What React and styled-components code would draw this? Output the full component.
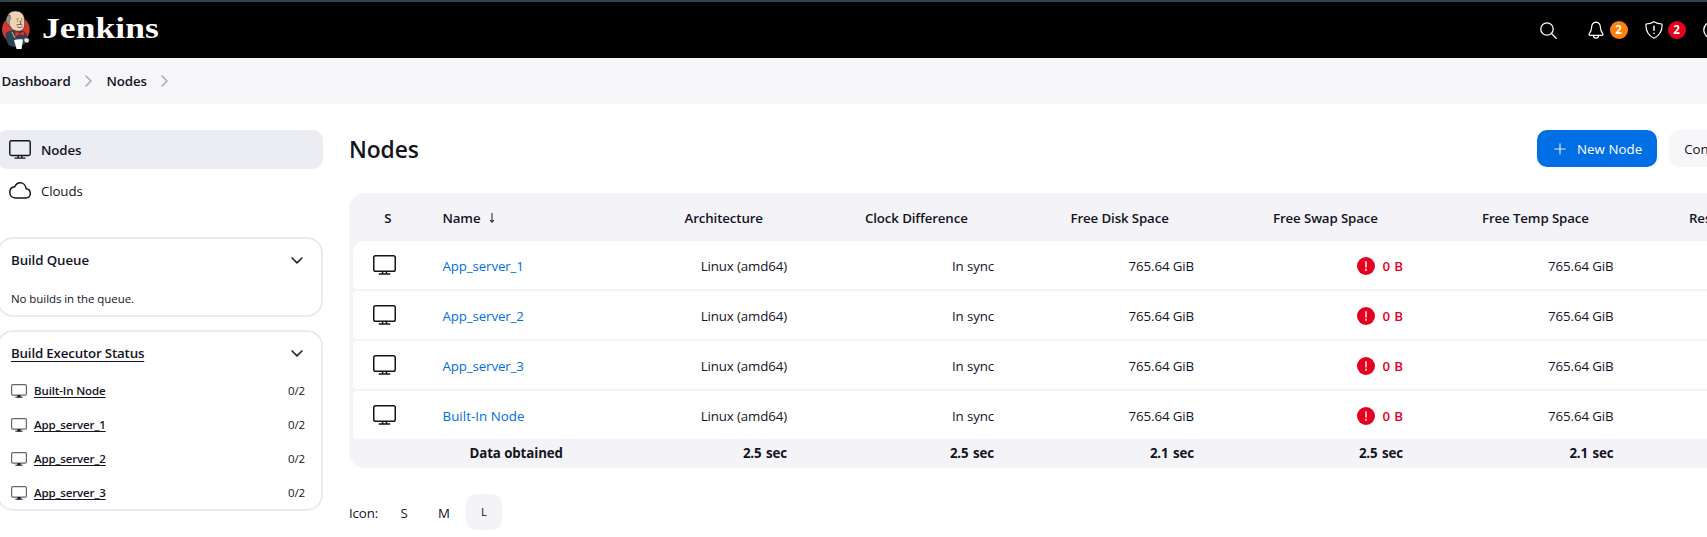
import React from 'react';
import styled, { createGlobalStyle, css } from 'styled-components';

const GlobalStyle = createGlobalStyle`
  * { box-sizing: border-box; }
  body {
    margin: 0;
    overflow: hidden;
    background: #fff;
    color: #14141f;
    font-family: 'Open Sans', 'Noto Sans', sans-serif;
    font-size: 13.3px;
    letter-spacing: -0.12px;
    line-height: 20px;
  }
`;

const Page = styled.div`
  width: 100%;
  height: 537px;
  overflow: hidden;
  display: flex;
  flex-direction: column;
`;

/* Header */
const Header = styled.header`
  flex: none;
  height: 58px;
  border-top: 2px solid #2b444c;
  background: #000;
  color: #fff;
  display: flex;
  align-items: center;
  justify-content: space-between;
  overflow: hidden;
`;

const Brand = styled.a`
  display: flex;
  align-items: center;
  gap: 12px;
  padding-left: 1px;
`;

const BrandName = styled.span`
  font: 700 30px/40px 'Liberation Serif', serif;
  letter-spacing: 0.1px;
  transform: scaleX(1.18);
  transform-origin: left center;
  margin-top: -4px;
`;

const HeaderTools = styled.nav`
  flex: none;
  width: 167.5px;
  display: flex;
  align-items: center;
  svg { flex: none; }
`;

const HeaderItem = styled.a`
  flex: none;
  display: flex;
  align-items: center;
  gap: ${(p) => p.$gap || 0}px;
  margin-right: ${(p) => p.$after}px;
`;

const Badge = styled.span`
  width: 18px;
  height: 18px;
  border-radius: 50%;
  background: ${(p) => p.$color};
  font-size: 11.5px;
  font-weight: 700;
  line-height: 18px;
  text-align: center;
  letter-spacing: 0;
`;

/* Breadcrumbs */
const Breadcrumbs = styled.nav`
  flex: none;
  height: 46px;
  background: #f6f6f8;
  display: flex;
  align-items: center;
  padding: 0 0 0 1.5px;
  font-weight: 600;
  letter-spacing: -0.16px;
  svg { margin: 0 14.5px 0 14.5px; }
`;

/* Layout */
const Body = styled.div`
  flex: 1;
  display: grid;
  grid-template-columns: 326px 1480px;
  column-gap: 26px;
  padding-top: 26px;
  margin-left: -3px;
`;

const Sidebar = styled.aside`
  display: flex;
  flex-direction: column;
`;

const Task = styled.a`
  height: 39px;
  margin-bottom: 2px;
  display: flex;
  align-items: center;
  gap: 10px;
  padding: 0 0 0 12px;
  border-radius: 10px;
  ${(p) => p.$active && css`
    background: #ecedf3;
    font-weight: 600;
    letter-spacing: -0.1px;
  `}
`;

const Pane = styled.section`
  flex: none;
  height: ${(p) => p.$height}px;
  margin-top: ${(p) => p.$gap}px;
  border: 2px solid #eaeaf2;
  border-radius: 16px;
  padding: 0 16px 0 12px;
`;

const PaneHeader = styled.div`
  height: 42px;
  padding-right: 2px;
  display: flex;
  align-items: center;
  justify-content: space-between;
  font-weight: 600;
  letter-spacing: -0.1px;
`;

const PaneTitle = styled.span`
  ${(p) => p.$link && css`
    text-decoration: underline;
    text-underline-offset: 2.5px;
    text-decoration-thickness: 1px;
    letter-spacing: -0.17px;
  `}
`;

const EmptyQueue = styled.p`
  margin: 8px 0 0;
  font-size: 11.5px;
  letter-spacing: -0.07px;
`;

const Executor = styled.div`
  height: 34px;
  display: flex;
  align-items: center;
  gap: 7px;
  font-size: 11.5px;
  letter-spacing: -0.13px;
  svg { color: #66666f; margin-top: -1px; }
`;

const ExecutorName = styled.a`
  flex: 1;
  font-weight: 600;
  text-decoration: underline;
  text-underline-offset: 2px;
  text-decoration-thickness: 1px;
  text-decoration-skip-ink: none;
`;

const Main = styled.main`
  display: flex;
  flex-direction: column;
`;

const AppBar = styled.div`
  height: 37px;
  display: flex;
  align-items: center;
`;

const Title = styled.h1`
  flex: none;
  margin: 0;
  padding-top: 2px;
  width: 1188px;
  font-size: 22.8px;
  line-height: 36px;
  font-weight: 600;
  letter-spacing: -0.1px;
`;

const Button = styled.button`
  flex: none;
  height: 37px;
  margin-right: 12px;
  border: 0;
  border-radius: 10px;
  padding: 0 15px 0 ${(p) => (p.$primary ? 17 : 15)}px;
  display: flex;
  align-items: center;
  gap: 11px;
  font: inherit;
  letter-spacing: ${(p) => (p.$primary ? 0.05 : -0.1)}px;
  white-space: nowrap;
  color: ${(p) => (p.$primary ? '#fff' : '#14141f')};
  background: ${(p) => (p.$primary ? '#006fe6' : '#f7f7f9')};
`;

/* Table */
const Table = styled.div`
  margin-top: 26px;
  height: 275px;
  padding: 0 4px;
  border-radius: 16px;
  background: #f3f3f8;
  display: flex;
  flex-direction: column;
`;

const Row = styled.div`
  flex: none;
  display: grid;
  grid-template-columns: 89.5px 242px 180.5px 205.5px 202.5px 209px 207px 1fr;
  align-items: center;
`;

const HeadRow = styled(Row)`
  height: 48px;
  padding-top: 2px;
  font-weight: 600;
  letter-spacing: -0.13px;
`;

const NodeRow = styled(Row)`
  height: 48px;
  padding-top: 2px;
  margin-bottom: 2px;
  background: #fff;
  border-radius: 4px;
  &:nth-child(2) { border-top-left-radius: 11px; }
`;

const FootRow = styled(Row)`
  height: 25px;
  margin-top: -1px;
  font-weight: 700;
  word-spacing: 1.2px;
`;

const StatusCell = styled.div`
  display: flex;
  justify-content: center;
  padding-right: ${(p) => p.$inset}px;
  svg { margin-top: -2px; }
`;

const NameCell = styled.div`
  display: flex;
  align-items: center;
  gap: 9px;
`;

const NodeLink = styled.a`
  color: #006fe6;
  letter-spacing: ${(p) => (p.children.includes('-') ? 0.05 : -0.12)}px;
`;

const ValueCell = styled.div`
  display: flex;
  justify-content: flex-end;
  align-items: center;
  gap: 8px;
  padding-right: ${(p) => p.$inset}px;
  color: ${(p) => (p.$error ? '#e6001f' : 'inherit')};
  font-weight: ${(p) => (p.$error ? 600 : 'inherit')};
  ${(p) => p.$error && 'word-spacing: 1px;'}
  svg { margin-top: -1px; }
`;

const ObtainedCell = styled.div`
  padding-left: 27px;
  word-spacing: 0;
  letter-spacing: -0.1px;
`;

/* Icon size picker */
const SizePicker = styled.div`
  display: flex;
  align-items: center;
  margin-top: 26px;
`;

const SizeLabel = styled.span`
  width: 35px;
  padding-top: 2px;
`;

const SizeOption = styled.a`
  width: ${(p) => (p.$selected ? 36 : 40)}px;
  height: 36px;
  border-radius: 10px;
  display: flex;
  align-items: center;
  justify-content: center;
  padding-top: ${(p) => (p.$selected ? 0 : 2)}px;
  margin-left: ${(p) => (p.$selected ? 2 : 0)}px;
  background: ${(p) => (p.$selected ? '#f3f3f8' : 'transparent')};
  font-size: ${(p) => (p.$selected ? 11.5 : 13.3)}px;
`;

/* Icons */
const Monitor = ({ width = 23, height = 20, stroke = 1.5 }) => (
  <svg width={width} height={height} viewBox="0 0 23 20" fill="none" stroke="currentColor" strokeWidth={stroke} strokeLinecap="round">
    <rect x="0.75" y="0.75" width="21.5" height="15.5" rx="1.8" />
    <path d="M9.8 16.4 9.4 19M13.2 16.4 13.6 19M6.3 19.1H16.7" />
  </svg>
);

const SmallMonitor = () => (
  <svg width="16" height="14" viewBox="0 0 16 14" fill="none" stroke="currentColor" strokeWidth="1.2">
    <rect x="0.6" y="0.6" width="14.8" height="10.6" rx="1.2" />
    <path d="M4.3 13.2H11.7" stroke="#44444e" />
    <path d="M6.5 11h3l.3 2.5H6.200z" fill="#22222c" stroke="none" />
  </svg>
);

const Cloud = () => (
  <svg width="22" height="17" viewBox="0 0 22 17" fill="none" stroke="currentColor" strokeWidth="1.5" strokeLinejoin="round">
    <path d="M17.1 6.7C16.7 3.3 14.3.8 11.2.8 8.600.8 6.800 2.400 5.800 4.800 2.800 5.100.8 7.300.8 10.300c0 3.200 2.300 5.600 5.300 5.600h11c2.300 0 4.200-1.800 4.200-4.500 0-2.600-1.700-4.500-4.200-4.700z" />
  </svg>
);

const Chevron = ({ right }) => (
  <svg width={right ? 7 : 12} height={right ? 12 : 7} viewBox={right ? '0 0 7 12' : '0 0 12 7'} fill="none" stroke={right ? '#9fb0c6' : '#2a2a33'} strokeWidth={right ? 1.6 : 1.7} strokeLinecap="round" strokeLinejoin="round">
    <path d={right ? 'M1 1l5 5-5 5' : 'M1.100 1l4.900 4.900L10.900 1'} />
  </svg>
);

const Search = () => (
  <svg width="17" height="17" viewBox="0 0 17 17" fill="none" stroke="#fff" strokeWidth="1.3" strokeLinecap="round">
    <circle cx="7" cy="7" r="6.200" />
    <path d="M11.600 11.600 16.200 16.200" />
  </svg>
);

const Bell = () => (
  <svg width="16" height="18" viewBox="0 0 16 18" fill="none" stroke="#fff" strokeWidth="1.2" strokeLinecap="round" strokeLinejoin="round">
    <path d="M8 1.200C5.200 1.500 3.700 3.600 3.600 6.300 3.500 10 2.700 11 1.400 12.500.7 13.400 1 14.300 2 14.300h12c1 0 1.300-.9.6-1.800C13.300 11 12.500 10 12.400 6.300 12.300 3.600 10.800 1.500 8 1.200z" />
    <path d="M5.500 14.500c0 1.600 1.100 2.600 2.500 2.600s2.500-1 2.500-2.600" />
  </svg>
);

const Shield = () => (
  <svg width="18" height="18" viewBox="0 0 18 18" fill="none" stroke="#fff" strokeWidth="1.200" strokeLinecap="round" strokeLinejoin="round">
    <path d="M9 .8C6.800 2.200 4 2.900 1 3 .5 9.500 3 14.400 9 17.300 15 14.400 17.500 9.500 17 3 14 2.900 11.200 2.200 9 .8z" />
    <path d="M9 5.300V9.300M9 12.200V12.500" strokeWidth="1.500" />
  </svg>
);

const Account = () => (
  <svg width="18" height="18" viewBox="0 0 18 18" fill="none" stroke="#fff" strokeWidth="1.300">
    <circle cx="9" cy="9" r="8.200" />
  </svg>
);

const Plus = () => (
  <svg width="12" height="12" viewBox="0 0 12 12" stroke="#fff" strokeOpacity="0.85" strokeWidth="1.200">
    <path d="M6 .5v11M.5 6h11" />
  </svg>
);

const SortArrow = () => (
  <svg width="6" height="10" viewBox="0 0 6 10" fill="none" stroke="#33333d" strokeWidth="1.100">
    <path d="M3 0v9M1 7.200l2 2 2-2" />
  </svg>
);

const ErrorIcon = () => (
  <svg width="18" height="18" viewBox="0 0 18 18">
    <circle cx="9" cy="9" r="9" fill="#e6001f" />
    <path d="M9 4.600V9.900M9 12.200v1.200" stroke="#fff" strokeWidth="1.400" strokeLinecap="round" />
  </svg>
);

const Butler = () => (
  <svg width="29" height="40" viewBox="0 0 29 40">
    <circle cx="14.900" cy="19.500" r="13.800" fill="#d33833" />
    <path d="M4.500 23c3-1.800 5.500-2.600 8.500-3l7 .5c3 .4 5 2.500 6 5l.5 5-3.500 4-9 2.500-6-1.500c-2.500-3-3.500-8-3.500-12.500z" fill="#2d4451" />
    <path d="M6.200 9C6 4 9.500 1 14.500 1s9 3 9 9c0 2 .5 4 0 6.500-.8 3-3.200 4.800-6 4.800-4 0-6.800-1.800-8.300-5C7 15.500 6.300 12.500 6.200 9z" fill="#efd2b0" stroke="#231f20" strokeWidth="0.600" />
    <path d="M6.300 6.200C4.800 7.500 5 11.500 6.300 14l2 1.200.2-4.500 1-1.700L9 5z" fill="#9b9490" stroke="#231f20" strokeWidth="0.400" />
    <path d="M15.500 9.300l2-.7M20 8.800l1.500.5M16 11.300h1.200M20.500 11.200h1M19 10.500l1 3.300-1.600.5M16 16.500c1.500 1.500 4 1.300 5.500.2M15.500 15c1.500-.8 4-.8 6 0" fill="none" stroke="#55413a" strokeWidth="0.800" />
    <path d="M14 20.500l4.500 2.600 4.500-2 .8 5.200-5-1.700-4.800 2.600z" fill="#d33833" stroke="#5b1616" strokeWidth="0.500" />
    <path d="M11 22l3 6" stroke="#e8e6e4" strokeWidth="0.800" />
    <path d="M13 30c3-1 6-1 9-.5l-1.500 9.500h-5z" fill="#fff" />
    <path d="M23 29c1.500-1.500 4-1.500 5 .5.500 2-.7 3-2 3.200-1.500.2-3-.7-3-3.700z" fill="#e8e6e4" stroke="#555" strokeWidth="0.500" />
  </svg>
);

const executors = ['Built-In Node', 'App_server_1', 'App_server_2', 'App_server_3'];
const nodes = ['App_server_1', 'App_server_2', 'App_server_3', 'Built-In Node'];
const monitors = [
  { label: 'Architecture', value: 'Linux (amd64)', obtained: '2.5 sec', inset: 78 },
  { label: 'Clock Difference', value: 'In sync', obtained: '2.5 sec', inset: 76.5 },
  { label: 'Free Disk Space', value: '765.64 GiB', obtained: '2.1 sec', inset: 79 },
  { label: 'Free Swap Space', value: '0 B', obtained: '2.5 sec', inset: 79, error: true },
  { label: 'Free Temp Space', value: '765.64 GiB', obtained: '2.1 sec', inset: 75.5 },
];

export default function App() {
  return (
    <Page>
      <GlobalStyle />
      <Header>
        <Brand>
          <Butler />
          <BrandName>Jenkins</BrandName>
        </Brand>
        <HeaderTools>
          <HeaderItem $after={31}><Search /></HeaderItem>
          <HeaderItem $gap={6} $after={17}><Bell /><Badge $color="#ff820a">2</Badge></HeaderItem>
          <HeaderItem $gap={5} $after={17}><Shield /><Badge $color="#e6001f">2</Badge></HeaderItem>
          <HeaderItem $after={0}><Account /></HeaderItem>
        </HeaderTools>
      </Header>
      <Breadcrumbs>
        <span>Dashboard</span><Chevron right />
        <span>Nodes</span><Chevron right />
      </Breadcrumbs>
      <Body>
        <Sidebar>
          <Task $active><Monitor width={22} height={19} />Nodes</Task>
          <Task><Cloud />Clouds</Task>
          <Pane $height={80} $gap={25}>
            <PaneHeader><PaneTitle>Build Queue</PaneTitle><Chevron /></PaneHeader>
            <EmptyQueue>No builds in the queue.</EmptyQueue>
          </Pane>
          <Pane $height={181} $gap={13}>
            <PaneHeader><PaneTitle $link>Build Executor Status</PaneTitle><Chevron /></PaneHeader>
            {executors.map((name) => (
              <Executor key={name}>
                <SmallMonitor />
                <ExecutorName>{name}</ExecutorName>
                <span>0/2</span>
              </Executor>
            ))}
          </Pane>
        </Sidebar>
        <Main>
          <AppBar>
            <Title>Nodes</Title>
            <Button $primary><Plus />New Node</Button>
            <Button>Configure Monitors</Button>
          </AppBar>
          <Table>
            <HeadRow>
              <StatusCell $inset={20}>S</StatusCell>
              <NameCell>Name<SortArrow /></NameCell>
              {monitors.map((m) => <div key={m.label}>{m.label}</div>)}
              <div>Response Time</div>
            </HeadRow>
            {nodes.map((name) => (
              <NodeRow key={name}>
                <StatusCell $inset={26}><Monitor /></StatusCell>
                <NodeLink>{name}</NodeLink>
                {monitors.map((m) => (
                  <ValueCell key={m.label} $inset={m.inset} $error={m.error}>
                    {m.error && <ErrorIcon />}
                    {m.value}
                  </ValueCell>
                ))}
              </NodeRow>
            ))}
            <FootRow>
              <div />
              <ObtainedCell>Data obtained</ObtainedCell>
              {monitors.map((m) => <ValueCell key={m.label} $inset={m.inset}>{m.obtained}</ValueCell>)}
            </FootRow>
          </Table>
          <SizePicker>
            <SizeLabel>Icon:</SizeLabel>
            <SizeOption>S</SizeOption>
            <SizeOption>M</SizeOption>
            <SizeOption $selected>L</SizeOption>
          </SizePicker>
        </Main>
      </Body>
    </Page>
  );
}
